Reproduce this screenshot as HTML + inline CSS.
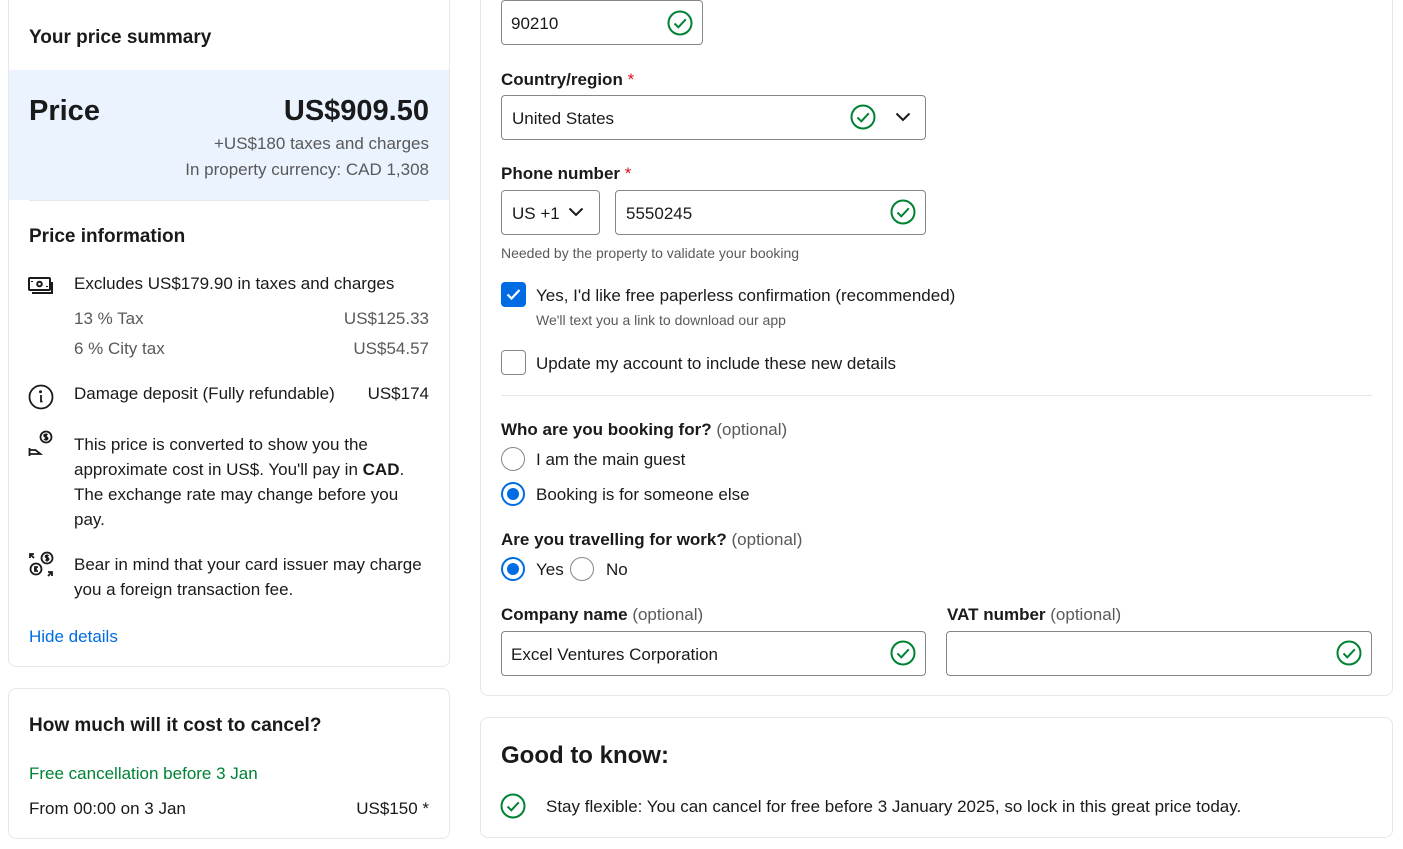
<!DOCTYPE html>
<html><head><meta charset="utf-8"><style>
*{margin:0;padding:0;box-sizing:border-box}
body{width:1403px;height:849px;background:#fff;position:relative;overflow:hidden;font-family:"Liberation Sans",Arial,sans-serif;color:#1a1a1a;font-size:16px}
.t{position:absolute;line-height:20px;white-space:nowrap;margin-top:1px}
.card{position:absolute;border:1px solid #e7e7e7;border-radius:8px;background:#fff}
.b{font-weight:bold}
.g{color:#595959}
.r{text-align:right}
.inp{position:absolute;border:1px solid #868686;border-radius:4px;background:#fff}
.ok{position:absolute;width:26px;height:26px}
.rad{position:absolute;width:24px;height:24px;border-radius:50%;border:1px solid #868686;background:#fff}
.rad.on{border:2px solid #006ce4}
.rad.on::after{content:"";position:absolute;left:4px;top:4px;width:12px;height:12px;border-radius:50%;background:#006ce4}
.star{color:#d4111e;font-weight:normal}
.opt{color:#595959;font-weight:normal}
</style></head><body>

<div class="card" style="left:8px;top:-10px;width:442px;height:677px"></div>
<div style="position:absolute;left:9px;top:70px;width:440px;height:130px;background:#ebf3ff"></div>
<div style="position:absolute;left:29px;top:200px;width:400px;height:1px;background:#e7e7e7"></div>
<div class="t b" style="left:29px;top:27px;font-size:19px">Your price summary</div>
<div class="t b" style="left:29px;top:94px;font-size:29px;line-height:32px">Price</div>
<div class="t b r" style="right:974px;top:94px;font-size:29px;line-height:32px">US$909.50</div>
<div class="t g r" style="right:974px;top:133px;font-size:17px">+US$180 taxes and charges</div>
<div class="t g r" style="right:974px;top:159px;font-size:17px">In property currency: CAD 1,308</div>
<div class="t b" style="left:29px;top:226px;font-size:19px">Price information</div>

<svg style="position:absolute;left:28px;top:276px" width="26" height="20" viewBox="0 0 26 20" fill="none" stroke="#1a1a1a" stroke-width="2"><rect x="1" y="2" width="21" height="12" rx="1"/><path d="M4 17h20V6"/><circle cx="11.5" cy="8" r="2.3"/><path d="M4 5v1M19 10v1"/></svg>
<div class="t" style="left:74px;top:273px;font-size:17px">Excludes US$179.90 in taxes and charges</div>
<div class="t g" style="left:74px;top:308px;font-size:17px">13 % Tax</div>
<div class="t g r" style="right:974px;top:308px;font-size:17px">US$125.33</div>
<div class="t g" style="left:74px;top:338px;font-size:17px">6 % City tax</div>
<div class="t g r" style="right:974px;top:338px;font-size:17px">US$54.57</div>

<svg style="position:absolute;left:28px;top:384px" width="26" height="26" viewBox="0 0 26 26" fill="none" stroke="#1a1a1a" stroke-width="1.8"><circle cx="13" cy="13" r="11.5"/><path d="M13 11v6.5h1.5"/><circle cx="12.5" cy="7.8" r="0.6" fill="#1a1a1a"/></svg>
<div class="t" style="left:74px;top:383px;font-size:17px">Damage deposit (Fully refundable)</div>
<div class="t r" style="right:974px;top:383px;font-size:17px">US$174</div>

<svg style="position:absolute;left:28px;top:430px" width="26" height="28" viewBox="0 0 26 28" fill="none" stroke="#1a1a1a" stroke-width="1.8"><circle cx="18" cy="7" r="5.5"/><path d="M19.5 5c-1-1-3.5-.8-3.3.7s3.6 1 3.4 2.7-2.4 1.6-3.4.6M18 3.5v7"/><path d="M1.5 18v8M1.5 20h6l5 4H1.5"/></svg>
<div class="t" style="left:74px;top:431px;font-size:17px;line-height:25px;white-space:normal;width:345px">This price is converted to show you the approximate cost in US$. You'll pay in <b>CAD</b>. The exchange rate may change before you pay.</div>

<svg style="position:absolute;left:28px;top:550px" width="28" height="28" viewBox="0 0 28 28" fill="none" stroke="#1a1a1a" stroke-width="1.8"><circle cx="19" cy="8" r="5.5"/><circle cx="8" cy="19" r="5.5"/><path d="M2 4l4 4M2 8V4h4"/><path d="M20 26l4-4M20 22h4v4"/><path d="M10 17h-3v4h3M6 19h3"/><path d="M20.5 6c-1-1-3-.7-2.9.6s3.2.9 3 2.4-2.2 1.4-3 .5M19 4.5v7"/></svg>
<div class="t" style="left:74px;top:551px;font-size:17px;line-height:25px;white-space:normal;width:370px">Bear in mind that your card issuer may charge you a foreign transaction fee.</div>

<div class="t" style="left:29px;top:626px;font-size:17px;color:#006ce4">Hide details</div>

<div class="card" style="left:8px;top:688px;width:442px;height:151px"></div>
<div class="t b" style="left:29px;top:715px;font-size:19px">How much will it cost to cancel?</div>
<div class="t" style="left:29px;top:763px;font-size:17px;color:#008234">Free cancellation before 3 Jan</div>
<div class="t" style="left:29px;top:798px;font-size:17px">From 00:00 on 3 Jan</div>
<div class="t r" style="right:974px;top:798px;font-size:17px">US$150 *</div>

<div class="card" style="left:480px;top:-10px;width:913px;height:706px"></div>

<div class="inp" style="left:501px;top:0px;width:202px;height:45px"></div>
<div class="t" style="left:511px;top:13px;font-size:17px">90210</div>
<svg class="ok" style="left:667px;top:10px" viewBox="0 0 26 26" fill="none" stroke="#008234" stroke-width="2"><circle cx="13" cy="13" r="11.5"/><path d="M7.5 13.5l3.8 3.8 7.5-8"/></svg>

<div class="t b" style="left:501px;top:69px;font-size:17px">Country/region <span class="star">*</span></div>
<div class="inp" style="left:501px;top:95px;width:425px;height:45px"></div>
<div class="t" style="left:512px;top:108px;font-size:17px">United States</div>
<svg class="ok" style="left:850px;top:104px" viewBox="0 0 26 26" fill="none" stroke="#008234" stroke-width="2"><circle cx="13" cy="13" r="11.5"/><path d="M7.5 13.5l3.8 3.8 7.5-8"/></svg>
<svg style="position:absolute;left:895px;top:112px" width="16" height="10" viewBox="0 0 16 10" fill="none" stroke="#1a1a1a" stroke-width="2"><path d="M1.5 1.5l6.5 6.5 6.5-6.5"/></svg>

<div class="t b" style="left:501px;top:163px;font-size:17px">Phone number <span class="star">*</span></div>
<div class="inp" style="left:501px;top:190px;width:99px;height:45px"></div>
<div class="t" style="left:512px;top:203px;font-size:17px">US +1</div>
<svg style="position:absolute;left:568px;top:207px" width="16" height="10" viewBox="0 0 16 10" fill="none" stroke="#1a1a1a" stroke-width="2"><path d="M1.5 1.5l6.5 6.5 6.5-6.5"/></svg>
<div class="inp" style="left:615px;top:190px;width:311px;height:45px"></div>
<div class="t" style="left:626px;top:203px;font-size:17px">5550245</div>
<svg class="ok" style="left:890px;top:199px" viewBox="0 0 26 26" fill="none" stroke="#008234" stroke-width="2"><circle cx="13" cy="13" r="11.5"/><path d="M7.5 13.5l3.8 3.8 7.5-8"/></svg>
<div class="t g" style="left:501px;top:242px;font-size:14px">Needed by the property to validate your booking</div>

<div style="position:absolute;left:501px;top:282px;width:25px;height:25px;border-radius:4px;background:#006ce4"></div>
<svg style="position:absolute;left:501px;top:282px" width="25" height="25" viewBox="0 0 25 25" fill="none" stroke="#fff" stroke-width="2.2"><path d="M6.5 12.5l4 4 8-8.5"/></svg>
<div class="t" style="left:536px;top:285px;font-size:17px">Yes, I'd like free paperless confirmation (recommended)</div>
<div class="t g" style="left:536px;top:309px;font-size:14px">We'll text you a link to download our app</div>

<div style="position:absolute;left:501px;top:350px;width:25px;height:25px;border-radius:4px;border:1px solid #868686"></div>
<div class="t" style="left:536px;top:353px;font-size:17px">Update my account to include these new details</div>

<div style="position:absolute;left:501px;top:395px;width:871px;height:1px;background:#e7e7e7"></div>

<div class="t b" style="left:501px;top:419px;font-size:17px">Who are you booking for? <span class="opt">(optional)</span></div>
<div class="rad" style="left:501px;top:447px"></div>
<div class="t" style="left:536px;top:449px;font-size:17px">I am the main guest</div>
<div class="rad on" style="left:501px;top:482px"></div>
<div class="t" style="left:536px;top:484px;font-size:17px">Booking is for someone else</div>

<div class="t b" style="left:501px;top:529px;font-size:17px">Are you travelling for work? <span class="opt">(optional)</span></div>
<div class="rad on" style="left:501px;top:557px"></div>
<div class="t" style="left:536px;top:559px;font-size:17px">Yes</div>
<div class="rad" style="left:570px;top:557px"></div>
<div class="t" style="left:606px;top:559px;font-size:17px">No</div>

<div class="t b" style="left:501px;top:604px;font-size:17px">Company name <span class="opt">(optional)</span></div>
<div class="inp" style="left:501px;top:631px;width:425px;height:45px"></div>
<div class="t" style="left:511px;top:644px;font-size:17px">Excel Ventures Corporation</div>
<svg class="ok" style="left:890px;top:640px" viewBox="0 0 26 26" fill="none" stroke="#008234" stroke-width="2"><circle cx="13" cy="13" r="11.5"/><path d="M7.5 13.5l3.8 3.8 7.5-8"/></svg>

<div class="t b" style="left:947px;top:604px;font-size:17px">VAT number <span class="opt">(optional)</span></div>
<div class="inp" style="left:946px;top:631px;width:426px;height:45px"></div>
<svg class="ok" style="left:1336px;top:640px" viewBox="0 0 26 26" fill="none" stroke="#008234" stroke-width="2"><circle cx="13" cy="13" r="11.5"/><path d="M7.5 13.5l3.8 3.8 7.5-8"/></svg>

<div class="card" style="left:480px;top:717px;width:913px;height:121px"></div>
<div class="t b" style="left:501px;top:741px;font-size:24px;line-height:28px">Good to know:</div>
<svg class="ok" style="left:500px;top:793px" viewBox="0 0 26 26" fill="none" stroke="#008234" stroke-width="2"><circle cx="13" cy="13" r="11.5"/><path d="M7.5 13.5l3.8 3.8 7.5-8"/></svg>
<div class="t" style="left:546px;top:796px;font-size:17px">Stay flexible: You can cancel for free before 3 January 2025, so lock in this great price today.</div>

</body></html>
